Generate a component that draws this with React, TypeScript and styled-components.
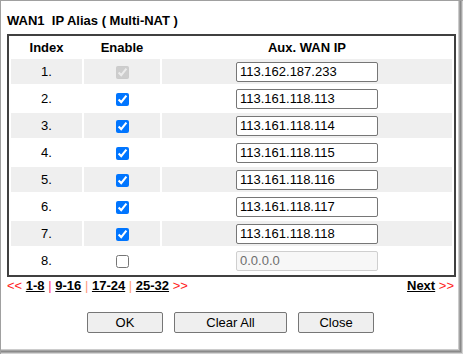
import styled, { createGlobalStyle } from "styled-components";

const GlobalStyle = createGlobalStyle`
  html, body {
    margin: 0;
    padding: 0;
    background: #ffffff;
  }
  body {
    font-family: "Liberation Sans", Arial, sans-serif;
    font-size: 13px;
    color: #000;
  }
`;

const StyledWindow = styled.div`
  box-sizing: border-box;
  width: 463px;
  height: 354px;
  border-top: 1px solid #a0a0a0;
  border-left: 1px solid #a0a0a0;
  padding: 12px 7px 0 6px;
  display: flex;
  flex-direction: column;
  box-shadow:
    inset -1px -1px 0 0 #d4d4d4,
    inset -2px -2px 0 0 #a8a8a8,
    inset -3px -3px 0 0 #8a8a8a,
    inset -4px -4px 0 0 #a4a4a4,
    inset -5px -5px 0 0 #cccccc;
`;

const StyledTitle = styled.div`
  font-weight: bold;
  line-height: 15px;
  height: 15px;
  margin-bottom: 6px;
  white-space: pre;
`;

const StyledTable = styled.table`
  width: 449px;
  border: 2px solid #404040;
  border-collapse: separate;
  border-spacing: 2px;
  table-layout: fixed;
`;

const StyledHeadCell = styled.th<{ $w: number }>`
  width: ${(p) => p.$w}px;
  height: 19px;
  padding: 0;
  font-weight: bold;
  text-align: center;
  line-height: 15px;
`;

const StyledRow = styled.tr<{ $shaded: boolean }>`
  background-color: ${(p) => (p.$shaded ? "#efefef" : "transparent")};
`;

const StyledCell = styled.td`
  height: 25px;
  padding: 0;
  text-align: center;
  vertical-align: middle;
  line-height: 15px;
`;

const StyledCheckbox = styled.input`
  width: 13px;
  height: 13px;
  margin: 0;
  vertical-align: middle;
`;

const StyledIpInput = styled.input`
  box-sizing: border-box;
  width: 142px;
  height: 20px;
  margin: 0;
  padding: 0 3px;
  border: 1px solid #767676;
  border-radius: 2px;
  background: #fff;
  font-family: "Liberation Sans", Arial, sans-serif;
  font-size: 13px;
  color: #000;
  vertical-align: middle;
  &:disabled {
    background: #f7f7f7;
    border-color: #cfcfcf;
    color: #6d6d6d;
  }
`;

const StyledPager = styled.div`
  display: flex;
  justify-content: space-between;
  align-items: center;
  width: 447px;
  margin-top: 1px;
  line-height: 15px;
  white-space: pre;
`;

const StyledArrow = styled.span`
  color: #ff2020;
`;

const StyledSep = styled.span<{ $c: string }>`
  color: ${(p) => p.$c};
`;

const StyledLink = styled.a`
  color: #000;
  font-weight: bold;
  text-decoration: underline;
`;

const StyledButtons = styled.div`
  display: flex;
  justify-content: center;
  gap: 11px;
  margin-top: 19px;
  width: 447px;
`;

const StyledButton = styled.button<{ $w: number }>`
  box-sizing: border-box;
  width: ${(p) => p.$w}px;
  height: 21px;
  margin: 0;
  padding: 0;
  background: #efefef;
  border: 1px solid #767676;
  border-radius: 2px;
  font-family: "Liberation Sans", Arial, sans-serif;
  font-size: 13px;
  color: #000;
`;

const rows = [
  { ip: "113.162.187.233", on: true, locked: true },
  { ip: "113.161.118.113", on: true },
  { ip: "113.161.118.114", on: true },
  { ip: "113.161.118.115", on: true },
  { ip: "113.161.118.116", on: true },
  { ip: "113.161.118.117", on: true },
  { ip: "113.161.118.118", on: true },
  { ip: "0.0.0.0", on: false },
];

export default function App() {
  return (
    <>
      <GlobalStyle />
      <StyledWindow>
        <StyledTitle>WAN1  IP Alias ( Multi-NAT )</StyledTitle>
        <StyledTable>
          <thead>
            <tr>
              <StyledHeadCell $w={71}>Index</StyledHeadCell>
              <StyledHeadCell $w={76}>Enable</StyledHeadCell>
              <StyledHeadCell $w={290}>Aux. WAN IP</StyledHeadCell>
            </tr>
          </thead>
          <tbody>
            {rows.map((r, i) => (
              <StyledRow key={i} $shaded={i % 2 === 0}>
                <StyledCell>{i + 1}.</StyledCell>
                <StyledCell>
                  <StyledCheckbox
                    type="checkbox"
                    defaultChecked={r.on}
                    disabled={r.locked}
                  />
                </StyledCell>
                <StyledCell>
                  <StyledIpInput
                    type="text"
                    defaultValue={r.ip}
                    disabled={!r.on}
                  />
                </StyledCell>
              </StyledRow>
            ))}
          </tbody>
        </StyledTable>

        <StyledPager>
          <span>
            <StyledArrow>{"<<"}</StyledArrow> <StyledLink>1-8</StyledLink>{" "}
            <StyledSep $c="#ff3070">|</StyledSep> <StyledLink>9-16</StyledLink>{" "}
            <StyledSep $c="#ff9a80">|</StyledSep> <StyledLink>17-24</StyledLink>{" "}
            <StyledSep $c="#ffa070">|</StyledSep> <StyledLink>25-32</StyledLink>{" "}
            <StyledArrow>{">>"}</StyledArrow>
          </span>
          <span>
            <StyledLink>Next</StyledLink> <StyledArrow>{">>"}</StyledArrow>
          </span>
        </StyledPager>

        <StyledButtons>
          <StyledButton $w={76}>OK</StyledButton>
          <StyledButton $w={113}>Clear All</StyledButton>
          <StyledButton $w={76}>Close</StyledButton>
        </StyledButtons>
      </StyledWindow>
    </>
  );
}
